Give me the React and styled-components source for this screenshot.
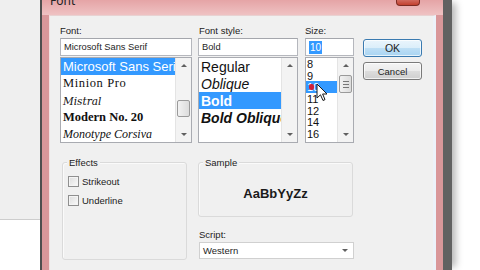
import React from "react";
import styled, { createGlobalStyle } from "styled-components";

const GlobalStyle = createGlobalStyle`
  html, body {
    margin: 0;
    padding: 0;
    background: #ffffff;
    overflow: hidden;
  }
  body {
    font-family: "Liberation Sans", Arial, sans-serif;
    color: #1e1e1e;
  }
`;

const Page = styled.div`
  width: 480px;
  height: 270px;
  display: flex;
  overflow: hidden;
  background: #ffffff;
`;

const LeftStrip = styled.div`
  width: 40px;
  display: flex;
  flex-direction: column;
`;

const GreyArea = styled.div`
  height: 219px;
  background: #efefef;
  border-bottom: 1px solid #cdcdcd;
`;

const WhiteArea = styled.div`
  flex: 1;
  background: #ffffff;
`;

const Window = styled.div`
  width: 412px;
  box-sizing: border-box;
  height: 270px;
  display: flex;
  flex-direction: column;
  background: #d9979a;
  border-left: 2px solid #4e4e4e;
  border-right: 9px solid #616161;
  padding: 0 7px;
  box-shadow: 7px 0 7px -3px rgba(0, 0, 0, 0.28);
`;

const TitleBar = styled.div`
  height: 15px;
  margin: 0 -7px;
  padding: 0 23px 0 8px;
  display: flex;
  justify-content: space-between;
  align-items: flex-start;
  background: linear-gradient(#e5a4a6, #efc2c3);
  overflow: hidden;
`;

const TitleText = styled.span`
  font-family: "Noto Sans", sans-serif;
  font-size: 12px;
  line-height: 12px;
  margin-top: -5px;
  color: #222;
`;

const CloseButton = styled.div`
  width: 24px;
  height: 6px;
  box-sizing: border-box;
  background: linear-gradient(#d26a5e, #c2402f);
  border: 1px solid #7d2b22;
  border-top: none;
  border-radius: 0 0 4px 4px;
`;

const Content = styled.div`
  flex: 1;
  background: #f0f0f0;
  border-top: 1px solid #e8d2d2;
  border-left: 1px solid #f2e2e2;
  border-right: 3px solid #edf2f9;
  padding: 9px 0 0 10px;
  display: flex;
  flex-direction: column;
`;

const TopRow = styled.div`
  display: flex;
  align-items: flex-start;
`;

const Column = styled.div`
  width: ${(p) => p.$width}px;
  margin-right: ${(p) => p.$gap || 0}px;
  display: flex;
  flex-direction: column;
`;

const Label = styled.div`
  height: 13px;
  font-size: 9.5px;
  line-height: 11px;
  padding-left: ${(p) => p.$indent || 0}px;
  color: #222;
`;

const TextInput = styled.div`
  height: 18px;
  box-sizing: border-box;
  background: #ffffff;
  border: 1px solid #b5b7bd;
  border-top-color: #a4a6ac;
  padding-left: 3px;
  font-size: 9.3px;
  display: flex;
  align-items: center;
  margin-bottom: 1px;
`;

const SelectedText = styled.span`
  background: #3399ff;
  color: #ffffff;
  padding: 1px 1px;
  line-height: 11px;
  font-size: 10px;
`;

const ListBox = styled.div`
  position: relative;
  height: 86px;
  box-sizing: border-box;
  background: #ffffff;
  border: 1px solid #a9abb1;
  display: flex;
  overflow: hidden;
`;

const Items = styled.div`
  flex: 1;
  overflow: hidden;
  display: flex;
  flex-direction: column;
`;

const Item = styled.div`
  height: ${(p) => p.$h}px;
  flex-shrink: 0;
  display: flex;
  align-items: center;
  padding-left: ${(p) => (p.$pad != null ? p.$pad : 2)}px;
  white-space: nowrap;
  font-family: ${(p) => p.$family || '"Liberation Sans", Arial, sans-serif'};
  font-size: ${(p) => p.$size}px;
  font-weight: ${(p) => (p.$bold ? 700 : 400)};
  font-style: ${(p) => (p.$italic ? "italic" : "normal")};
  letter-spacing: ${(p) => p.$spacing || 0}px;
  background: ${(p) => (p.$selected ? "#3399ff" : "transparent")};
  color: ${(p) => (p.$selected ? "#ffffff" : "#111")};
`;

const ScrollBar = styled.div`
  width: 15px;
  flex-shrink: 0;
  background: #f3f3f3;
  border-left: 1px solid #e4e4e4;
  display: flex;
  flex-direction: column;
`;

const ArrowButton = styled.div`
  height: 15px;
  display: flex;
  align-items: center;
  justify-content: center;
`;

const Triangle = styled.div`
  width: 0;
  height: 0;
  border-left: 3px solid transparent;
  border-right: 3px solid transparent;
  ${(p) =>
    p.$down
      ? "border-top: 3px solid #606060;"
      : "border-bottom: 3px solid #606060;"}
`;

const Track = styled.div`
  flex: 1;
  display: flex;
  flex-direction: column;
  align-items: center;
`;

const Thumb = styled.div`
  width: 13px;
  height: ${(p) => p.$h}px;
  margin-top: ${(p) => p.$top}px;
  box-sizing: border-box;
  border: 1px solid #9a9a9a;
  border-radius: 2px;
  background: linear-gradient(90deg, #f2f2f2, #dcdcdc);
  display: flex;
  flex-direction: column;
  align-items: center;
  justify-content: center;
  gap: 2px;
`;

const Grip = styled.div`
  width: 6px;
  height: 1px;
  background: #777;
`;

const Cursor = styled.svg`
  position: absolute;
  left: 10px;
  top: 25px;
`;

const RedDot = styled.div`
  position: absolute;
  left: 3px;
  top: 26px;
  width: 5px;
  height: 6px;
  border-radius: 2px;
  background: #d0203a;
`;

const ButtonColumn = styled.div`
  width: 59px;
  padding-top: 14px;
  display: flex;
  flex-direction: column;
  gap: 5px;
`;

const Button = styled.div`
  height: 18px;
  box-sizing: border-box;
  border: 1px solid ${(p) => (p.$default ? "#3a7ab0" : "#7a7a7a")};
  border-radius: 3px;
  background: ${(p) =>
    p.$default
      ? "linear-gradient(#eaf5fc 0%, #dbeefa 50%, #bedff5 51%, #a8d4f2 100%)"
      : "linear-gradient(#f4f4f4 0%, #ebebeb 50%, #dddddd 51%, #cfcfcf 100%)"};
  box-shadow: inset 0 0 0 1px rgba(255, 255, 255, 0.7);
  display: flex;
  align-items: center;
  justify-content: center;
  font-size: ${(p) => (p.$default ? 10.5 : 9.5)}px;
  color: #222;
`;

const BottomRow = styled.div`
  display: flex;
  align-items: flex-start;
`;

const GroupBox = styled.div`
  width: ${(p) => p.$width}px;
  height: ${(p) => p.$height}px;
  box-sizing: border-box;
  margin-top: 19px;
  margin-left: ${(p) => p.$left || 0}px;
  margin-right: ${(p) => p.$right || 0}px;
  border: 1px solid #dadada;
  border-radius: 3px;
  box-shadow: inset 1px 1px 0 #fafafa;
  display: flex;
  flex-direction: column;
`;

const Caption = styled.div`
  width: fit-content;
  margin: -6px 0 0 4px;
  padding: 0 2px;
  background: #f0f0f0;
  font-size: 9.5px;
  line-height: 11px;
  color: #222;
`;

const CheckList = styled.div`
  display: flex;
  flex-direction: column;
  gap: 7px;
  padding: 7px 0 0 5px;
`;

const CheckRow = styled.label`
  display: flex;
  align-items: center;
  gap: 3px;
  font-size: 9.5px;
  height: 12px;
  color: #222;
`;

const CheckBox = styled.span`
  width: 11px;
  height: 11px;
  box-sizing: border-box;
  border: 1px solid #8f8f8f;
  background: linear-gradient(135deg, #dcdcdc, #fbfbfb);
  box-shadow: inset 0 0 0 1px #f4f4f4;
`;

const SampleArea = styled.div`
  flex: 1;
  display: flex;
  align-items: center;
  justify-content: center;
  padding-top: 3px;
  font-size: 13px;
  font-weight: 700;
  color: #1a1a1a;
`;

const RightColumn = styled.div`
  width: 156px;
  display: flex;
  flex-direction: column;
`;

const ScriptLabel = styled.div`
  margin-top: 12px;
  height: 13px;
  padding-left: 1px;
  font-size: 9.5px;
  line-height: 11px;
  color: #222;
`;

const Select = styled.div`
  height: 17px;
  margin-left: 1px;
  box-sizing: border-box;
  background: #ffffff;
  border: 1px solid #d0d0d0;
  display: flex;
  align-items: center;
  justify-content: space-between;
  padding: 0 5px 0 3px;
  font-size: 9.5px;
`;

const Scroll = ({ thumbTop, thumbH, grip }) => (
  <ScrollBar>
    <ArrowButton>
      <Triangle />
    </ArrowButton>
    <Track>
      {thumbH ? (
        <Thumb $top={thumbTop} $h={thumbH}>
          {grip && (
            <>
              <Grip />
              <Grip />
              <Grip />
            </>
          )}
        </Thumb>
      ) : null}
    </Track>
    <ArrowButton>
      <Triangle $down />
    </ArrowButton>
  </ScrollBar>
);

const fonts = [
  { name: "Microsoft Sans Serif", size: 13, selected: true },
  { name: "Minion Pro", size: 12.5, family: '"Liberation Serif", serif', spacing: 0.6 },
  { name: "Mistral", size: 10.5, family: '"DejaVu Serif", serif', italic: true },
  { name: "Modern No. 20", size: 12.5, family: '"Liberation Serif", serif', bold: true },
  { name: "Monotype Corsiva", size: 12, family: '"Liberation Serif", serif', italic: true },
];

const styles = [
  { name: "Regular" },
  { name: "Oblique", italic: true },
  { name: "Bold", bold: true, selected: true },
  { name: "Bold Oblique", bold: true, italic: true },
  { name: "" },
];

const sizes = ["8", "9", "10", "11", "12", "14", "16", "18"];

export default function App() {
  return (
    <Page>
      <GlobalStyle />
      <LeftStrip>
        <GreyArea />
        <WhiteArea />
      </LeftStrip>
      <Window>
        <TitleBar>
          <TitleText>Font</TitleText>
          <CloseButton />
        </TitleBar>
        <Content>
          <TopRow>
            <Column $width={132} $gap={6}>
              <Label>Font:</Label>
              <TextInput>Microsoft Sans Serif</TextInput>
              <ListBox>
                <Items>
                  {fonts.map((f) => (
                    <Item
                      key={f.name}
                      $h={17}
                      $size={f.size}
                      $family={f.family}
                      $italic={f.italic}
                      $bold={f.bold}
                      $spacing={f.spacing}
                      $selected={f.selected}
                    >
                      {f.name}
                    </Item>
                  ))}
                </Items>
                <Scroll thumbTop={27} thumbH={17} />
              </ListBox>
            </Column>
            <Column $width={100} $gap={7}>
              <Label $indent={1}>Font style:</Label>
              <TextInput>Bold</TextInput>
              <ListBox>
                <Items>
                  {styles.map((s, i) => (
                    <Item
                      key={i}
                      $h={17}
                      $size={14}
                      $italic={s.italic}
                      $bold={s.bold}
                      $selected={s.selected}
                    >
                      {s.name}
                    </Item>
                  ))}
                </Items>
                <Scroll />
              </ListBox>
            </Column>
            <Column $width={49} $gap={9}>
              <Label>Size:</Label>
              <TextInput>
                <SelectedText>10</SelectedText>
              </TextInput>
              <ListBox>
                <Items>
                  {sizes.map((s) => (
                    <Item key={s} $h={11.7} $size={11} $pad={1} $selected={s === "10"}>
                      {s}
                    </Item>
                  ))}
                </Items>
                <Scroll thumbTop={2} thumbH={18} grip />
                <RedDot />
                <Cursor width="12" height="19" viewBox="0 0 12 19">
                  <path
                    d="M1 1 L1 15 L4.5 11.8 L7 17.5 L9 16.6 L6.6 11 L11 11 Z"
                    fill="#ffffff"
                    stroke="#1a1a1a"
                    strokeWidth="1"
                    strokeLinejoin="round"
                  />
                </Cursor>
              </ListBox>
            </Column>
            <ButtonColumn>
              <Button $default>OK</Button>
              <Button>Cancel</Button>
            </ButtonColumn>
          </TopRow>
          <BottomRow>
            <GroupBox $width={125} $height={98} $left={2} $right={11}>
              <Caption>Effects</Caption>
              <CheckList>
                <CheckRow>
                  <CheckBox />
                  Strikeout
                </CheckRow>
                <CheckRow>
                  <CheckBox />
                  Underline
                </CheckRow>
              </CheckList>
            </GroupBox>
            <RightColumn>
              <GroupBox $width={155} $height={55}>
                <Caption>Sample</Caption>
                <SampleArea>AaBbYyZz</SampleArea>
              </GroupBox>
              <ScriptLabel>Script:</ScriptLabel>
              <Select>
                Western
                <Triangle $down />
              </Select>
            </RightColumn>
          </BottomRow>
        </Content>
      </Window>
    </Page>
  );
}
